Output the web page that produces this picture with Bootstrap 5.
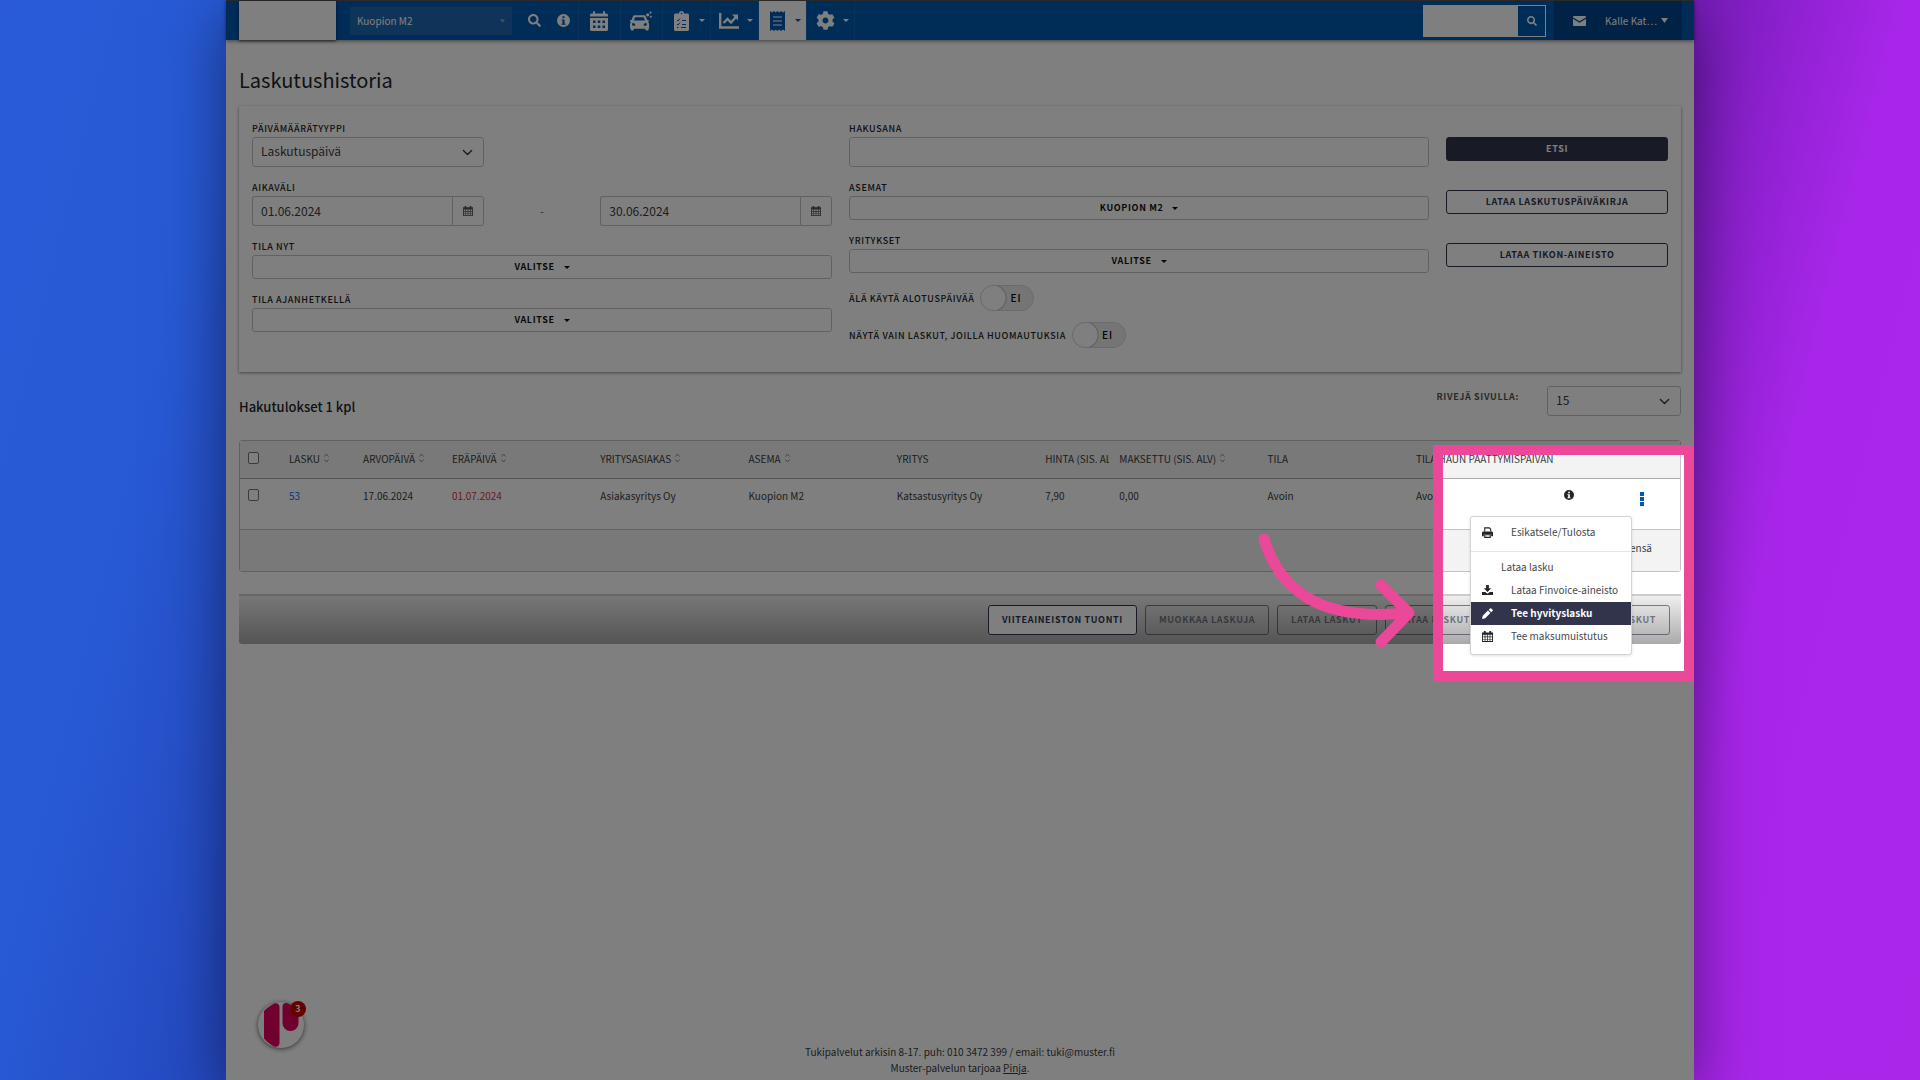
<!DOCTYPE html>
<html lang="fi">
<head>
<meta charset="utf-8">
<meta name="viewport" content="width=device-width, initial-scale=1">
<title>Laskutushistoria</title>
<link href="https://cdn.jsdelivr.net/npm/bootstrap@5.3.0/dist/css/bootstrap.min.css" rel="stylesheet">
<style>
:root{--brand:#0058b1;--navy:#31344b;--line:#c3c3c3;--pink:#ec4899}
body{font-family:"Noto Sans CJK SC","Noto Sans",sans-serif;font-size:10px;line-height:16px;color:#3c3c3c;background:linear-gradient(104deg,#2a5ad8 0%,#285ad5 11%,#2444ba 25%,#6a1aac 75%,#a826ea 87%,#aa27ea 100%);min-height:100vh}
.app{position:relative;width:calc(100% - 452px);min-height:100vh;background:#fff;box-shadow:0 16px 60px rgba(0,0,20,.5)}
.clip{position:absolute;inset:0;overflow:hidden;pointer-events:none;z-index:20}
/* top bar */
.topbar{height:40px;background:var(--brand);border-top:1px solid #555;box-shadow:0 1px 4px rgba(0,0,0,.5);padding:0 12px 0 13px;color:#fff}
.logo-box{width:97px;background:#fff;box-shadow:0 1px 3px rgba(0,0,0,.6)}
.site-select{width:162px;height:28px;margin:0 8px 0 14px;padding:0 7px;border:0;border-radius:0;font-size:10px;color:#fff;background:#1f69b3 url("data:image/svg+xml,%3Csvg xmlns='http://www.w3.org/2000/svg' viewBox='0 0 6 4'%3E%3Cpath fill='%23999' d='M0 0h6L3 4z'/%3E%3C/svg%3E") no-repeat right 7px center/5px 4px}
.tool{width:29px;color:#fff}
.tab-link{width:42px;padding-right:2px;color:#fff;border-left:1px solid #1363b5}
.tab-wide{width:48px;padding-left:6px;gap:6px}
.tab-icon{width:24px}
.tab-on{background:#fff;color:var(--brand)}
.caret{display:inline-block;border:3px solid transparent;border-top-color:currentColor;border-bottom:0}
.find{height:32px;border:1px solid #fff}
.find input{width:94px;border:0;background:#fff}
.find button{width:27px;border:0;background:var(--brand);color:#fff}
.user-box{width:128px;background:#004488;margin-left:8px;padding:0 14px 0 19px}
/* content */
.content-area{padding:26px 13px 0}
.page-title{font-size:20px;line-height:28px;font-weight:400;color:#212529;margin:0 0 12px}
.filter-panel{padding:13px 13px 14px;box-shadow:0 1px 3px rgba(0,0,0,.45);min-height:266px}
.filter-panel .row{--bs-gutter-x:17px}
.lbl{display:block;font-size:9px;line-height:17px;padding-top:1px;font-weight:500;letter-spacing:.07em;text-transform:uppercase;color:#222;margin:0}
.ctl{height:30px;border:1px solid var(--line);border-radius:3px;font-size:12px;line-height:16px;padding:0 8px 2px;color:#3c3c3c;background-color:#fff}
select.ctl{background-position:right 10px center;background-size:11px}
.gap-field{margin-bottom:11px}
.date-btn{width:35px;border:1px solid var(--line);border-radius:0 3px 3px 0;background:#fff;color:#555}
.pick{height:24px;width:100%;border:1px solid var(--line);border-radius:3px;background:#fff;font-size:9px;font-weight:700;letter-spacing:.07em;color:#111;text-transform:uppercase;gap:9px}
.act{height:24px;font-size:9px;line-height:12px;font-weight:700;letter-spacing:.07em;text-transform:uppercase;border:1px solid var(--navy);border-radius:3px;background:#fff;color:var(--navy);padding:0 13px}
.act-dark{background:var(--navy);color:#fff}
.side-acts{padding-top:18px;gap:29px}
.toggle-row{padding-top:1px;margin-bottom:10px;gap:6px}
.toggle{display:inline-grid;align-items:center}
.toggle>*{grid-area:1/1}
.toggle input{appearance:none;width:54px;height:26px;margin:0;border-radius:13px;border:1px solid #d6d6d6;background:radial-gradient(circle at 12px 12px,#fff 0 12px,#bbb 13px,transparent 14px) #ebebeb}
.toggle span{padding-left:30px;font-size:10px;font-weight:500;letter-spacing:1px;color:#000}
/* results */
.res-head{padding-top:14px;margin-bottom:23px}
.res-title{font-size:13px;font-weight:500;line-height:20px;padding-top:11px;color:#212529;margin:0}
.rows-lbl{color:#555;font-weight:700;padding-top:2px;margin-right:28px}
.rows-sel{width:134px}
.grid-box{border:1px solid var(--line);border-radius:3px}
.grid{table-layout:fixed;width:100%;margin:0;font-size:10px;line-height:16px;color:#3c3c3c}
.grid th,.grid td{padding:9px 0 8px 8px;font-weight:400;vertical-align:top;white-space:nowrap}
.grid th{text-transform:uppercase;height:37px;background:#f3f3f3;border-bottom:1px solid #aaa;padding-top:10px}
.grid tbody td{height:51px}
.grid tfoot td{height:42px;background:#f3f3f3;border-top:1px solid var(--line);padding-top:10px}
.c-chk{width:2.84%}.c-1{width:5.15%}.c-15{width:6.17%}.c-2{width:10.3%}
.cut{overflow:hidden;margin-right:2px}
.grid input{appearance:none;display:block;width:11px;height:12px;margin:1px 0 0;border:1px solid #767676;border-radius:2px;background:#fff}
.sorter{width:5px;height:10px;margin:-3px 0 0 4px}
.grid .last{padding-left:10px}
.kebab{border:0;background:none;padding:4px 0 0;color:var(--brand)}
.row-menu{display:block;top:37px;right:48px;width:162px;padding:4px 0 6px;border:1px solid #d4d4d4;border-radius:3px;font-size:10px;z-index:5;min-width:0;box-shadow:0 1px 3px rgba(0,0,0,.12)}
.row-menu a{display:flex;align-items:center;height:23px;padding:0 11px;color:#484848;text-decoration:none}
.row-menu svg{width:11px;height:11px;margin-right:18px;color:#212529}
.row-menu .sub{padding-left:30px}
.row-menu .picked{background:var(--navy);color:#fff;font-weight:700}
.row-menu .picked svg{color:#fff}
.row-menu hr{margin:7px 0 4px;color:#999}
.action-bar{margin-top:22px;height:50px;padding:0 11px;gap:8px;border-top:2px solid #ccc;border-radius:0 0 3px 3px;background:linear-gradient(#efefef,#aaa)}
.action-bar .act{height:30px;border-radius:3px}
.action-bar .act:disabled{background:transparent;opacity:.6}
.act-wide{min-width:170px;text-align:left}
/* floating parts */
.chat{position:absolute;left:32px;bottom:32px;width:46px;height:46px;border:0;padding:0;border-radius:50%;background:#fff;box-shadow:0 1px 5px rgba(0,0,0,.6)}
.chat .count{position:absolute;right:-2px;top:-1px;width:16px;height:16px;border-radius:50%;background:#c00;color:#fff;font-size:9px;line-height:16px;font-weight:700}
.spot{position:absolute;right:0;top:445px;width:261px;height:236px;border:10px solid var(--pink);box-shadow:0 0 0 3000px rgba(0,0,0,.5)}
.arrow{position:absolute;right:278px;top:532px;width:160px;height:118px}
.foot{position:absolute;left:0;right:0;bottom:4px}
svg{display:block;flex:none}
</style>
</head>
<body class="d-flex justify-content-center">
<svg width="0" height="0" class="position-absolute" aria-hidden="true">
  <symbol id="i-search" viewBox="0 0 512 512"><path fill="currentColor" d="M505 442.7L405.3 343c-4.5-4.5-10.6-7-17-7H372c27.6-35.3 44-79.7 44-128C416 93.1 322.9 0 208 0S0 93.1 0 208s93.1 208 208 208c48.3 0 92.7-16.4 128-44v16.3c0 6.4 2.5 12.5 7 17l99.7 99.7c9.4 9.4 24.6 9.4 33.9 0l28.3-28.3c9.4-9.4 9.4-24.6.1-34zM208 336c-70.7 0-128-57.2-128-128 0-70.7 57.2-128 128-128 70.7 0 128 57.2 128 128 0 70.7-57.2 128-128 128z"/></symbol>
  <symbol id="i-info" viewBox="0 0 12 12"><path fill="currentColor" fill-rule="evenodd" d="M6 0a6 6 0 100 12A6 6 0 006 0zM5 2h2v2H5zM4 5h3v4h1v1H4V9h1V6H4z"/></symbol>
  <symbol id="i-sort" viewBox="0 0 5 10"><path fill="none" stroke="#888" d="M.5 3.5l2-2.500 2 2.500M.5 6.500l2 2.500 2-2.500"/></symbol>
  <symbol id="i-cal" viewBox="0 0 12 12"><path fill="currentColor" fill-rule="evenodd" d="M0 1.500h2V0h2v1.500h4V0h2v1.500h2V12H0zM1 4.200v1.900h1.900V4.200zm2.700 0v1.900h1.900V4.200zm2.700 0v1.900h1.900V4.200zm2.700 0v1.900H11V4.200zM1 6.800v1.800h1.900V6.800zm2.700 0v1.800h1.900V6.800zm2.700 0v1.800h1.900V6.800zm2.700 0v1.800H11V6.800zM1 9.300V11h1.900V9.300zm2.700 0V11h1.900V9.300zm2.700 0V11h1.900V9.300zm2.700 0V11H11V9.300z"/></symbol>
</svg>

<div class="app d-flex flex-column">
  <nav class="topbar d-flex align-items-stretch flex-shrink-0">
    <div class="logo-box"></div>
    <div class="d-flex align-items-center">
      <select class="form-select site-select" aria-label="Toimipaikka"><option>Kuopion M2</option></select>
      <a class="tool d-flex justify-content-center" href="#" aria-label="Haku"><svg width="13" height="13"><use href="#i-search"/></svg></a>
      <a class="tool d-flex justify-content-center" href="#" aria-label="Ohje"><svg width="13" height="13"><use href="#i-info"/></svg></a>
    </div>
    <a class="tab-link d-flex align-items-center justify-content-center" href="#" aria-label="Kalenteri"><svg width="18" height="20" viewBox="0 0 18 20"><path fill="currentColor" fill-rule="evenodd" d="M3 2.500V1a1 1 0 012 0v1.500h8V1a1 1 0 012 0v1.500h1.500A1.500 1.500 0 0118 4v1.500H0V4a1.500 1.500 0 011.500-1.500zM0 7h18v11.500a1.500 1.500 0 01-1.500 1.500h-15A1.500 1.500 0 010 18.500zm3 2.500v2.500h2.500V9.500zm4.700 0v2.500h2.600V9.500zm4.800 0v2.500H15V9.500zM3 14.500V17h2.500v-2.500zm4.700 0V17h2.600v-2.500zm4.800 0V17H15v-2.500z"/></svg></a>
    <a class="tab-link d-flex align-items-center justify-content-center" href="#" aria-label="Ajoneuvot"><svg width="22" height="20" viewBox="0 0 23 20"><path fill="currentColor" fill-rule="evenodd" d="M5 4h9.500c1 0 1.600.5 2 1.400L18 9h1.500v1.500l-.7.500c.8.700 1.200 1.400 1.200 2.500V17c0 .5-.3.800-.5.900V19c0 .6-.4 1-1 1H17c-.6 0-1-.4-1-1v-1H4v1c0 .6-.4 1-1 1H1.700c-.6 0-1-.4-1-1v-1.100C.3 17.700 0 17.500 0 17v-3.500c0-1.100.4-1.800 1.200-2.500L0 10.500V9h1.700L3 5.400C3.400 4.500 4 4 5 4zm.3 2L4 9.500h11.700L14.300 6zM3.500 12a1.500 1.500 0 100 3c.8 0 2 .2 2-.6S4.300 12 3.500 12zm12.700 0c-.8 0-2 1.600-2 2.400s1.200.6 2 .6a1.500 1.500 0 000-3z"/><circle cx="18.500" cy="3.500" r="1.700" fill="currentColor"/><circle cx="21.500" cy="1.200" r="1.100" fill="currentColor"/><circle cx="21.700" cy="5.500" r="1.100" fill="currentColor"/></svg></a>
    <a class="tab-link tab-wide d-flex align-items-center" href="#" aria-label="Tehtävät"><span class="tab-icon d-flex justify-content-center"><svg width="15" height="20" viewBox="0 0 15 20"><path fill="currentColor" d="M1.500 2.500H5a2.500 2.500 0 015 0h3.500A1.500 1.500 0 0115 4v14.500a1.500 1.500 0 01-1.500 1.500h-12A1.500 1.500 0 010 18.500V4a1.500 1.500 0 011.500-1.500z"/><circle cx="7.500" cy="2.500" r=".8" fill="#0058b1"/><path fill="none" stroke="#0058b1" d="M3 9l1 1 2-2.500M3 13l1 1 2-2.500M8 9.500h4M8 13.500h4M3 16.500h1.500M7 16.500h5"/></svg></span><span class="caret"></span></a>
    <a class="tab-link tab-wide d-flex align-items-center" href="#" aria-label="Raportit"><span class="tab-icon d-flex justify-content-center"><svg width="20" height="16" viewBox="0 0 20 16"><path fill="none" stroke="currentColor" stroke-width="2.400" d="M1.200 0v14.500H20"/><path fill="none" stroke="currentColor" stroke-width="2.400" d="M4.500 10l4-4 3.500 3.500L17 4"/><path fill="currentColor" d="M13 1.500h6v6z"/></svg></span><span class="caret"></span></a>
    <a class="tab-link tab-wide tab-on d-flex align-items-center" href="#" aria-label="Laskutus"><span class="tab-icon d-flex justify-content-center"><svg width="15" height="20" viewBox="0 0 15 20"><path fill="currentColor" d="M0 0l2 1.500L4 0l1.800 1.500L7.500 0l1.800 1.500L11 0l2 1.500L15 0v20l-2-1.500-2 1.500-1.700-1.500L7.500 20l-1.700-1.500L4 20l-2-1.500L0 20z"/><path stroke="#fff" stroke-width="1.200" d="M3 6h9M3 10h9M3 14h9"/></svg></span><span class="caret"></span></a>
    <a class="tab-link tab-wide d-flex align-items-center" href="#" aria-label="Asetukset"><span class="tab-icon d-flex justify-content-center"><svg width="19" height="19" viewBox="0 0 512 512"><path fill="currentColor" d="M487.400 315.700l-42.600-24.600c4.300-23.200 4.300-47 0-70.200l42.600-24.600c4.900-2.800 7.100-8.600 5.500-14-11.100-35.600-30-67.800-54.700-94.600-3.800-4.100-10-5.100-14.800-2.300L380.800 110c-17.900-15.400-38.500-27.300-60.800-35.100V25.800c0-5.600-3.900-10.500-9.400-11.700-36.700-8.200-74.300-7.800-109.200 0-5.500 1.200-9.400 6.100-9.400 11.700V75c-22.200 7.900-42.800 19.800-60.800 35.100L88.700 85.500c-4.900-2.800-11-1.900-14.800 2.300-24.700 26.700-43.600 58.900-54.700 94.600-1.700 5.400.6 11.200 5.500 14L67.300 221c-4.300 23.200-4.300 47 0 70.200l-42.600 24.600c-4.900 2.800-7.100 8.600-5.500 14 11.100 35.600 30 67.800 54.700 94.600 3.800 4.100 10 5.100 14.800 2.300l42.600-24.600c17.900 15.400 38.500 27.300 60.800 35.100v49.200c0 5.600 3.900 10.500 9.400 11.700 36.700 8.200 74.300 7.800 109.200 0 5.500-1.200 9.400-6.100 9.400-11.700v-49.200c22.200-7.900 42.800-19.800 60.800-35.100l42.600 24.600c4.900 2.800 11 1.900 14.800-2.300 24.700-26.700 43.600-58.900 54.700-94.600 1.500-5.500-.7-11.300-5.600-14.100zM256 336c-44.100 0-80-35.900-80-80s35.900-80 80-80 80 35.900 80 80-35.900 80-80 80z"/></svg></span><span class="caret"></span></a>
    <span class="border-start" style="--bs-border-color:#1363b5"></span>
    <form class="find d-flex align-self-center ms-auto">
      <input type="text" aria-label="Pikahaku"><button type="button" class="d-flex align-items-center justify-content-center" aria-label="Hae"><svg width="10" height="10"><use href="#i-search"/></svg></button>
    </form>
    <div class="user-box d-flex align-items-center justify-content-between">
      <svg width="13" height="10" viewBox="0 0 13 10"><rect width="13" height="10" rx="1" fill="#fff"/><path d="M0 2l6.500 4L13 2" fill="none" stroke="#004488" stroke-width="1.200"/></svg>
      <a href="#" class="text-white text-decoration-none d-flex align-items-center gap-1"><span>Kalle Kat…</span><svg width="7" height="5" viewBox="0 0 7 5"><path fill="#fff" d="M0 0h7L3.500 5z"/></svg></a>
    </div>
  </nav>

  <main class="content-area">
    <h1 class="page-title">Laskutushistoria</h1>
    <form class="filter-panel">
      <div class="row">
        <div class="col-5">
          <div class="row"><div class="col-5 gap-field">
            <label class="lbl" for="dtype">Päivämäärätyyppi</label>
            <select id="dtype" class="form-select ctl"><option>Laskutuspäivä</option></select>
          </div></div>
          <label class="lbl" for="d1">Aikaväli</label>
          <div class="row gap-field align-items-center">
            <div class="col-5"><div class="d-flex"><input id="d1" class="form-control ctl rounded-end-0 border-end-0" value="01.06.2024"><button type="button" class="date-btn d-flex align-items-center justify-content-center" aria-label="Valitse alkupäivä"><svg width="10" height="10"><use href="#i-cal"/></svg></button></div></div>
            <div class="col-2 text-center">-</div>
            <div class="col-5"><div class="d-flex"><input class="form-control ctl rounded-end-0 border-end-0" aria-label="Loppupäivä" value="30.06.2024"><button type="button" class="date-btn d-flex align-items-center justify-content-center" aria-label="Valitse loppupäivä"><svg width="10" height="10"><use href="#i-cal"/></svg></button></div></div>
          </div>
          <label class="lbl" for="p1">Tila nyt</label>
          <button type="button" id="p1" class="pick gap-field d-flex align-items-center justify-content-center">Valitse <span class="caret"></span></button>
          <label class="lbl" for="p2">Tila ajanhetkellä</label>
          <button type="button" id="p2" class="pick d-flex align-items-center justify-content-center">Valitse <span class="caret"></span></button>
        </div>
        <div class="col-5">
          <label class="lbl" for="kw">Hakusana</label>
          <input id="kw" class="form-control ctl gap-field">
          <label class="lbl" for="p3">Asemat</label>
          <button type="button" id="p3" class="pick gap-field d-flex align-items-center justify-content-center">Kuopion M2 <span class="caret"></span></button>
          <label class="lbl" for="p4">Yritykset</label>
          <button type="button" id="p4" class="pick gap-field d-flex align-items-center justify-content-center">Valitse <span class="caret"></span></button>
          <div class="toggle-row d-flex align-items-center"><label class="lbl" for="s1">Älä käytä alotuspäivää</label><label class="toggle"><input type="checkbox" id="s1"><span>EI</span></label></div>
          <div class="toggle-row d-flex align-items-center"><label class="lbl" for="s2">Näytä vain laskut, joilla huomautuksia</label><label class="toggle"><input type="checkbox" id="s2"><span>EI</span></label></div>
        </div>
        <div class="col-2"><div class="side-acts d-flex flex-column">
          <button type="button" class="act act-dark">Etsi</button>
          <button type="button" class="act">Lataa laskutuspäiväkirja</button>
          <button type="button" class="act">Lataa Tikon-aineisto</button>
        </div></div>
      </div>
    </form>

    <div class="res-head d-flex justify-content-between">
      <h2 class="res-title">Hakutulokset 1 kpl</h2>
      <div class="d-flex"><label class="lbl rows-lbl" for="rows">Rivejä sivulla:</label><select id="rows" class="form-select ctl rows-sel"><option>15</option></select></div>
    </div>

    <div class="grid-box">
      <table class="grid">
        <colgroup><col class="c-chk"><col class="c-1"><col class="c-15"><col class="c-2"><col class="c-2"><col class="c-2"><col class="c-2"><col class="c-1"><col class="c-2"><col class="c-2"><col class="c-2"><col class="c-1"><col></colgroup>
        <thead><tr>
          <th><input type="checkbox" aria-label="Valitse kaikki"></th>
          <th><div class="d-flex align-items-center">Lasku <svg class="sorter"><use href="#i-sort"/></svg></div></th>
          <th><div class="d-flex align-items-center">Arvopäivä <svg class="sorter"><use href="#i-sort"/></svg></div></th>
          <th><div class="d-flex align-items-center">Eräpäivä <svg class="sorter"><use href="#i-sort"/></svg></div></th>
          <th><div class="d-flex align-items-center">Yritysasiakas <svg class="sorter"><use href="#i-sort"/></svg></div></th>
          <th><div class="d-flex align-items-center">Asema <svg class="sorter"><use href="#i-sort"/></svg></div></th>
          <th>Yritys</th>
          <th><div class="cut">Hinta (sis. alv)</div></th>
          <th><div class="d-flex align-items-center">Maksettu (sis. alv) <svg class="sorter"><use href="#i-sort"/></svg></div></th>
          <th>Tila</th>
          <th colspan="3">Tila haun päättymispäivän</th>
        </tr></thead>
        <tbody><tr>
          <td><input type="checkbox" aria-label="Valitse lasku 53"></td>
          <td><a href="#" class="text-decoration-none">53</a></td>
          <td>17.06.2024</td>
          <td class="text-danger">01.07.2024</td>
          <td>Asiakasyritys Oy</td>
          <td>Kuopion M2</td>
          <td>Katsastusyritys Oy</td>
          <td>7,90</td>
          <td>0,00</td>
          <td>Avoin</td>
          <td>Avoin</td>
          <td><svg class="text-dark" width="10" height="14"><use href="#i-info"/></svg></td>
          <td class="last position-relative">
            <button type="button" class="kebab" aria-label="Toiminnot"><svg width="4" height="14" viewBox="0 0 4 14"><path fill="currentColor" d="M0 0h4v4H0zM0 5h4v4H0zM0 10h4v4H0z"/></svg></button>
            <div class="dropdown-menu row-menu">
              <a href="#"><svg viewBox="0 0 12 12"><path fill="none" stroke="currentColor" stroke-width="1.200" d="M3 5V1h5l1.500 1.500V5M3 8.500h6v2.800H3z"/><path fill="currentColor" d="M1.500 5h9A1.500 1.500 0 0112 6.500V10h-2V8H2v2H0V6.500A1.500 1.500 0 011.500 5z"/></svg>Esikatsele/Tulosta</a>
              <hr>
              <a href="#" class="sub">Lataa lasku</a>
              <a href="#"><svg viewBox="0 0 12 12"><path fill="currentColor" d="M4.500 0h3v3.500H10L6 7.500 2 3.500h2.500zM0 7.500h3.500L6 9.500l2.500-2H12V11H0z"/></svg>Lataa Finvoice-aineisto</a>
              <a href="#" class="picked"><svg viewBox="0 0 12 12"><path fill="currentColor" d="M0 12l.8-3.500 5.700-5.700 2.700 2.700-5.700 5.700zM7.300 2L8.800.5a1 1 0 011.400 0l1.300 1.300a1 1 0 010 1.400L10 4.700z"/></svg>Tee hyvityslasku</a>
              <a href="#"><svg><use href="#i-cal"/></svg>Tee maksumuistutus</a>
            </div>
          </td>
        </tr></tbody>
        <tfoot><tr><td colspan="13"><div class="text-end pe-4 me-1">Yhteensä</div></td></tr></tfoot>
      </table>
    </div>

    <div class="action-bar d-flex align-items-center justify-content-end">
      <button type="button" class="act">Viiteaineiston tuonti</button>
      <button type="button" class="act" disabled>Muokkaa laskuja</button>
      <button type="button" class="act" disabled>Lataa laskut</button>
      <button type="button" class="act act-wide" disabled>Lataa laskutustiedot</button>
      <button type="button" class="act" disabled>Lähetä laskut</button>
    </div>
  </main>

  <button type="button" class="chat" aria-label="Chat"><svg width="46" height="46" viewBox="0 0 46 46"><path fill="#e0005a" d="M6 9c3-3 7-6 10-7.500 3-1 5.500.5 5.500 3.500v36c0 3-2.500 4.500-5.500 3.500-3-1.500-7-4.500-10-8zM24.500 5c0-3 2-4.500 5-3.700C34 3 40.500 8 40.500 12v9a8 8 0 01-16 0z"/></svg><span class="count">3</span></button>

  <footer class="foot text-center">Tukipalvelut arkisin 8-17. puh: 010 3472 399 / email: tuki@muster.fi<br>Muster-palvelun tarjoaa <a href="#" class="text-reset">Pinja</a>.</footer>

  <div class="clip">
    <div class="spot"></div>
    <svg class="arrow" viewBox="1255 532 160 118"><path fill="none" stroke="#ec4899" stroke-width="11" stroke-linecap="round" stroke-linejoin="round" d="M1263 539C1278 588 1316 622 1406 613M1380 585L1408 613L1380 642"/></svg>
  </div>
</div>
<script src="https://cdn.jsdelivr.net/npm/bootstrap@5.3.0/dist/js/bootstrap.bundle.min.js"></script>
</body>
</html>
